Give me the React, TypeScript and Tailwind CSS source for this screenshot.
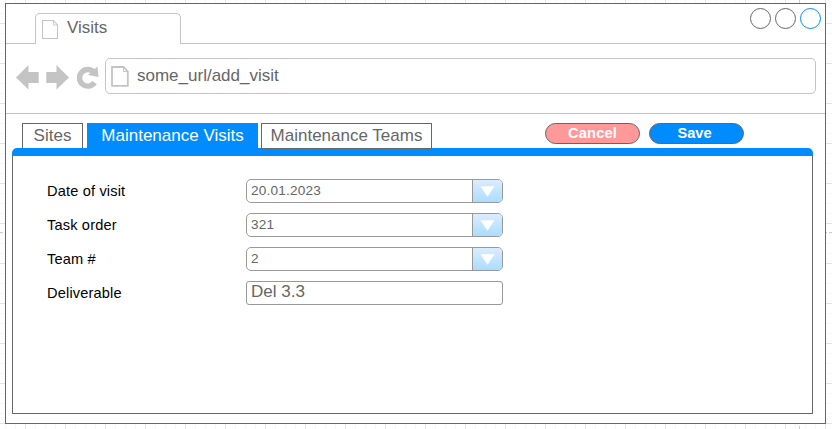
import React from 'react';

function TabPageIcon() {
  return (
    <svg className="h-[19px] w-[16px] shrink-0" viewBox="0 0 16 19" fill="none" stroke="#c4c4c4">
      <path d="M.5 .5H11.5L15.5 5V18.5H.5Z" strokeWidth="1.1" />
      <path d="M11.5 .5V5H15.5" strokeWidth=".8" />
    </svg>
  );
}

function UrlPageIcon() {
  return (
    <svg className="h-[21px] w-[18px] shrink-0" viewBox="0 0 18 21" fill="none" stroke="#c4c4c4">
      <path d="M1 1H12.5L16.8 5.5V19.8H1Z" strokeWidth="1.8" />
      <path d="M12.5 1V5.5H16.8" strokeWidth="1" />
    </svg>
  );
}

function NavIcons() {
  return (
    <svg className="h-[26px] w-[84px] shrink-0" viewBox="15 64 84 26" fill="#c4c4c4">
      <path d="M16 77.5L28.5 65V72H38.7V83H28.5V89.5Z" />
      <path d="M69 77.5L56.5 65V72H46.3V83H56.5V89.5Z" />
      <path d="M94.6 82.6A8.3 8.3 0 1 1 94 72.3" fill="none" stroke="#c4c4c4" strokeWidth="5.4" />
      <path d="M97.4 66.6L98.5 77L88 75Z" />
    </svg>
  );
}

function Row({ label, children }: { label: string; children: React.ReactNode }) {
  return (
    <div className="flex h-[34px] items-start">
      <div className="w-[199px] shrink-0 pt-[4px] text-[14.6px] leading-[17px] tracking-[0.16px] text-black">{label}</div>
      {children}
    </div>
  );
}

function Select({ value }: { value: string }) {
  return (
    <div className="flex h-6 w-[257px] overflow-hidden rounded-[5px] border border-[#999]">
      <div className="grow pl-1 pt-[2px] text-[13.6px] leading-[18px] tracking-[0.2px] text-[#666]">{value}</div>
      <div className="flex w-[30px] items-center justify-center border-l border-[#999] bg-linear-to-b from-[#dbecff] to-[#aaddff]">
        <svg className="h-[11px] w-[15px]" viewBox="0 0 15 11" fill="white">
          <path d="M.5 .2H14.5L7.5 10.7Z" />
        </svg>
      </div>
    </div>
  );
}

const grid =
  'bg-[linear-gradient(to_right,#e3e3e3_1px,transparent_1px),linear-gradient(to_bottom,#e3e3e3_1px,transparent_1px),linear-gradient(to_right,#f7f7f7_1px,transparent_1px),linear-gradient(to_bottom,#f7f7f7_1px,transparent_1px)] bg-[size:40px_40px,40px_40px,10px_10px,10px_10px] bg-[position:25px_23px,25px_23px,5px_3px,5px_3px]';

export default function App() {
  return (
    <div className={`relative h-[429px] w-[832px] overflow-hidden bg-white pl-[5px] pt-[3px] font-['Liberation_Sans',Arial,sans-serif] text-[#666] ${grid}`}>
      <div className="absolute left-0 top-[232px] h-px w-full border-t border-dashed border-[#ccc]" />
      <div className="absolute left-[799px] top-0 h-full w-px border-l border-dashed border-[#ccc]" />
      <div className="relative flex h-[421px] w-[821px] flex-col border border-[#666] bg-white">
        <header className="flex h-10 shrink-0 items-end justify-between border-b border-[#c4c4c4] pl-[29px] pr-1">
          <div className="-mb-px flex h-[31px] w-[146px] rounded-t-[5px] border border-b-0 border-[#c4c4c4] bg-white pl-[6px] pt-[6px]">
            <TabPageIcon />
            <span className="-mt-[2px] ml-[9px] text-[17px] leading-[20px]">Visits</span>
          </div>
          <div className="flex gap-1 self-start pt-1">
            <div className="size-[21px] rounded-full border border-[#666]" />
            <div className="size-[21px] rounded-full border border-[#666]" />
            <div className="size-[21px] rounded-full border border-[#008cff]" />
          </div>
        </header>
        <nav className="flex h-[70px] shrink-0 items-start border-b border-[#c4c4c4] pl-[9px] pt-[14px]">
          <div className="pt-[6px]"><NavIcons /></div>
          <div className="ml-[6px] flex h-9 w-[711px] rounded-[5px] border border-[#c4c4c4] pl-[5px] pt-[7px]">
            <UrlPageIcon />
            <span className="ml-[8px] text-[17px] leading-[20px]">some_url/add_visit</span>
          </div>
        </nav>
        <div className="flex h-[34px] shrink-0 items-start pl-4 pt-[9px] text-[17px] leading-[24px]">
          <div className="h-[26px] w-[61px] border border-[#666] text-center">Sites</div>
          <div className="ml-1 h-[26px] w-[171px] bg-[#008cff] pt-px text-center text-white">Maintenance Visits</div>
          <div className="relative z-10 ml-[3px] h-[26px] w-[171px] border border-[#666] bg-white text-center">Maintenance Teams</div>
          <button className="ml-[113px] flex h-[21px] w-[95px] justify-center rounded-full border border-[#666] bg-[#ff9999] text-[14.6px] font-bold leading-[19px] tracking-[0.2px] text-white">Cancel</button>
          <button className="ml-[9px] flex h-[21px] w-[95px] justify-center rounded-full border border-[#666] bg-[#008cff] pr-1 text-[14.6px] font-bold leading-[19px] text-white">Save</button>
        </div>
        <main className="ml-[6px] h-[266px] w-[801px] overflow-hidden rounded-t-[5px] bg-[#008cff] pt-2">
          <div className="h-[258px] border border-t-0 border-[#666] bg-white pl-[34px] pt-[23px]">
            <Row label="Date of visit"><Select value="20.01.2023" /></Row>
            <Row label="Task order"><Select value="321" /></Row>
            <Row label="Team #"><Select value="2" /></Row>
            <Row label="Deliverable">
              <div className="h-6 w-[257px] rounded-[3px] border border-[#999] pl-1 text-[17px] leading-[20px]">Del 3.3</div>
            </Row>
          </div>
        </main>
      </div>
    </div>
  );
}
